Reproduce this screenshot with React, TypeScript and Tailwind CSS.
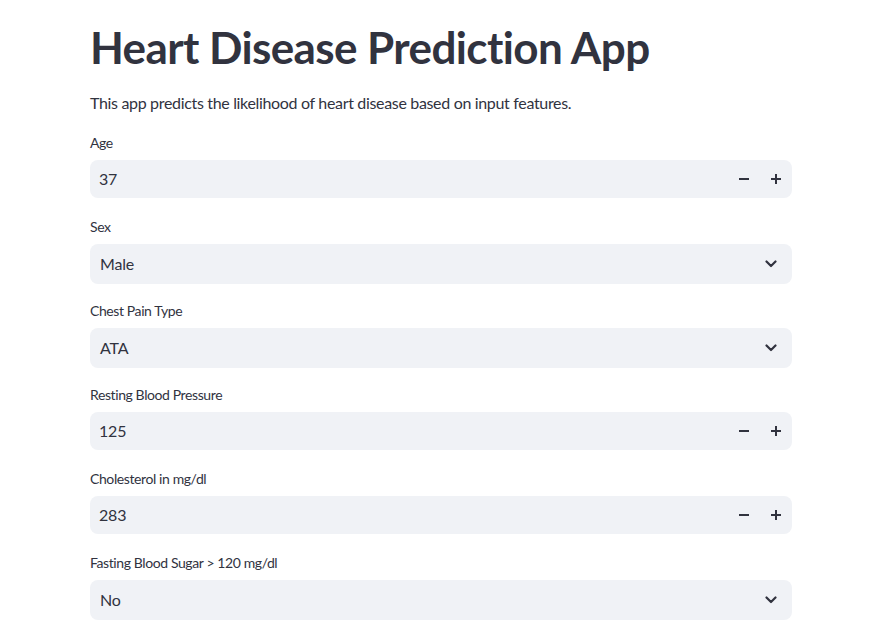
import React from "react";

const font = { fontFamily: "Lato, 'Noto Sans', sans-serif" };

const Minus = () => (
  <svg width="10" height="10" viewBox="0 0 10 10">
    <rect x="0" y="4" width="10" height="2" fill="#31333F" />
  </svg>
);

const Plus = () => (
  <svg width="10" height="10" viewBox="0 0 10 10">
    <rect x="0" y="4" width="10" height="2" fill="#31333F" />
    <rect x="4" y="0" width="2" height="10" fill="#31333F" />
  </svg>
);

const Chevron = () => (
  <svg width="12" height="8" viewBox="0 0 12 8" fill="none">
    <path d="M1.5 1.5 L6 6 L10.5 1.5" stroke="#31333F" strokeWidth="2.2" strokeLinecap="round" strokeLinejoin="round" />
  </svg>
);

const NumberField = ({ label, value }: { label: string; value: string }) => (
  <div className="flex flex-col pb-[18px]">
    <div className="h-[28px] text-[14px] leading-[21px] tracking-[-0.4px] text-[#31333F]">{label}</div>
    <div className="flex h-[38px] items-center rounded-lg bg-[#F0F2F6]">
      <div className="flex-1 pl-[9px] text-[16px] tracking-[-0.2px] text-[#31333F]">{value}</div>
      <div className="flex h-full w-[32px] items-center justify-center">
        <Minus />
      </div>
      <div className="flex h-full w-[32px] items-center justify-center">
        <Plus />
      </div>
    </div>
  </div>
);

const SelectField = ({ label, value }: { label: string; value: string }) => (
  <div className="flex flex-col pb-[16px]">
    <div className="h-[28px] text-[14px] leading-[21px] tracking-[-0.4px] text-[#31333F]">{label}</div>
    <div className="flex h-[40px] items-center rounded-lg bg-[#F0F2F6] pl-[10px] pr-[15px]">
      <div className="flex-1 text-[16px] tracking-[-0.2px] text-[#31333F]">{value}</div>
      <Chevron />
    </div>
  </div>
);

export default function App() {
  return (
    <div className="min-h-screen bg-white" style={font}>
      <div className="ml-[90px] w-[702px] pt-[24px]">
        <h1 className="text-[44px] font-bold leading-[46px] tracking-[-0.6px] text-[#31333F]">Heart Disease Prediction App</h1>
        <p className="mt-[21px] text-[16px] leading-[24px] tracking-[-0.33px] text-[#31333F]">
          This app predicts the likelihood of heart disease based on input features.
        </p>
        <div className="mt-[17px] flex flex-col">
          <NumberField label="Age" value="37" />
          <SelectField label="Sex" value="Male" />
          <SelectField label="Chest Pain Type" value="ATA" />
          <NumberField label="Resting Blood Pressure" value="125" />
          <NumberField label="Cholesterol in mg/dl" value="283" />
          <SelectField label="Fasting Blood Sugar > 120 mg/dl" value="No" />
        </div>
      </div>
    </div>
  );
}
